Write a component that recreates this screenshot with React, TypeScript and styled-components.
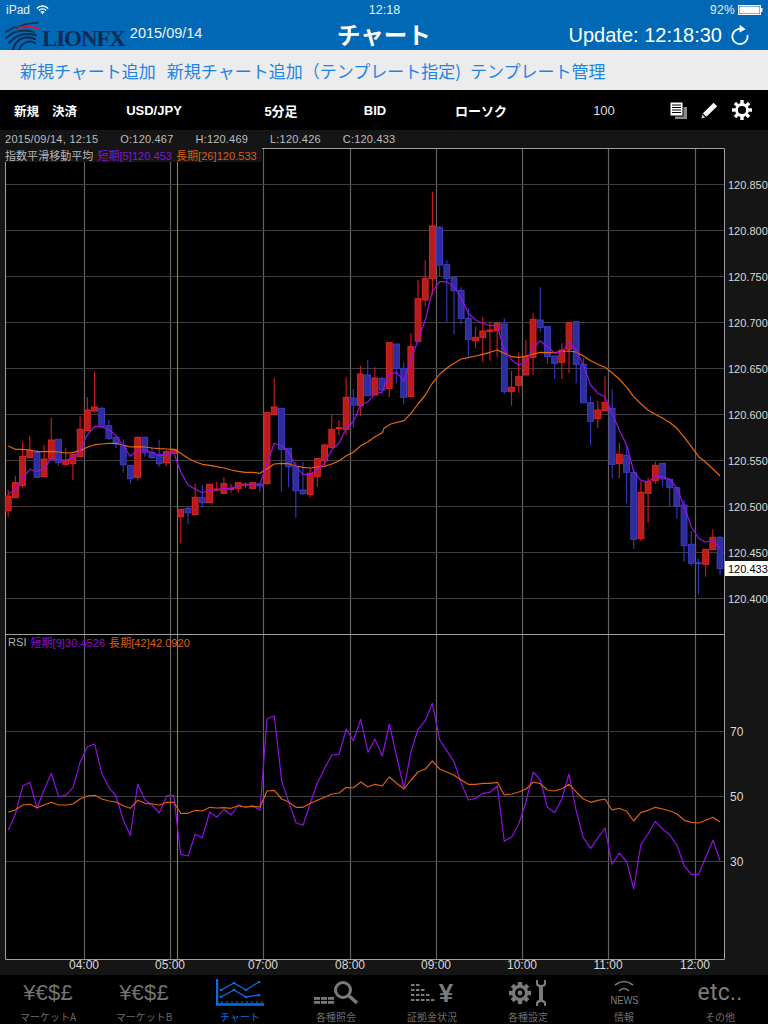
import React from "react";
import styled, { createGlobalStyle } from "styled-components";

const Global = createGlobalStyle`
  html, body { margin: 0; padding: 0; background: #000; }
  body { font-family: "Liberation Sans", "Noto Sans CJK JP", sans-serif; }
`;

const Page = styled.div`
  width: 768px;
  height: 1024px;
  display: flex;
  flex-direction: column;
  overflow: hidden;
  background: #000;
`;

const Header = styled.header`
  height: 50px;
  background: #0068b4;
  color: #fff;
  display: flex;
  flex-direction: column;
`;
const StatusRow = styled.div`
  height: 20px;
  display: grid;
  grid-template-columns: 1fr auto 1fr;
  align-items: center;
  padding: 0 5px 0 6px;
  font-size: 12px;
  color: #e8f1f8;
`;
const StatusLeft = styled.div`
  display: flex;
  align-items: center;
  gap: 6px;
`;
const StatusRight = styled.div`
  display: flex;
  align-items: center;
  justify-content: flex-end;
  gap: 3px;
  letter-spacing: 0.3px;
`;
const Clock = styled.div`
  font-weight: 400;
  font-size: 12.5px;
`;
const NavRow = styled.div`
  height: 30px;
  display: grid;
  grid-template-columns: 1fr auto 1fr;
  align-items: center;
`;
const Brand = styled.div`
  display: flex;
  align-items: center;
  padding-left: 5px;
`;
const BrandName = styled.span`
  font-family: "Liberation Serif", serif;
  font-weight: 700;
  font-size: 23px;
  line-height: 26px;
  letter-spacing: -1.1px;
  color: #102a50;
  margin: 6px 0 0 3px;
`;
const DateText = styled.span`
  font-size: 14.5px;
  margin: -7px 0 0 5px;
  color: #eef5fa;
`;
const Title = styled.h1`
  margin: -5px 0 0;
  font-family: "Noto Sans CJK JP", sans-serif;
  font-size: 23.5px;
  line-height: 30px;
  font-weight: 700;
`;
const UpdateBox = styled.div`
  display: flex;
  justify-content: flex-end;
  align-items: center;
  gap: 9px;
  padding-right: 19px;
  margin-top: -2px;
  font-size: 20px;
`;

const ActionBar = styled.nav`
  height: 40px;
  background: #ececec;
  display: flex;
  align-items: center;
  gap: 11px;
  padding-left: 20px;
`;
const ActionLink = styled.span<{ $tight?: boolean }>`
  font-family: "Noto Sans CJK JP", sans-serif;
  font-size: 17px;
  color: #1f83e6;
  white-space: nowrap;
  margin-right: ${(p) => (p.$tight ? "-2px" : "0")};
`;

const Toolbar = styled.div`
  height: 40px;
  background: #000;
  display: grid;
  grid-template-columns: 90px 128px 126px 62px 150px 96px 1fr;
  align-items: center;
  color: #fff;
  font-size: 13px;
  font-weight: 700;
`;
const TradeGroup = styled.div`
  display: flex;
  gap: 13px;
  padding-left: 14px;
  font-family: "Noto Sans CJK JP", sans-serif;
  font-size: 12.5px;
`;
const ToolCell = styled.div<{ $light?: boolean }>`
  text-align: center;
  font-weight: ${(p) => (p.$light ? 400 : 700)};
  color: ${(p) => (p.$light ? "#ddd" : "#fff")};
`;
const ToolIcons = styled.div`
  display: flex;
  align-items: center;
  gap: 14px;
  padding-left: 18px;
`;

const InfoBar = styled.div`
  height: 18px;
  background: #151515;
  display: flex;
  align-items: center;
  gap: 22px;
  padding-left: 5px;
  font-size: 11px;
  letter-spacing: 0.2px;
  color: #bdbdbd;
`;
const InfoDate = styled.span`
  letter-spacing: 0.27px;
`;

const ChartWrap = styled.div`
  position: relative;
  height: 827px;
  background: #151515;
`;
const ChartSvg = styled.svg`
  display: block;
`;
const Legend = styled.div<{ $top: number; $left: number; $bg?: boolean; $gap: number }>`
  position: absolute;
  top: ${(p) => p.$top}px;
  left: ${(p) => p.$left}px;
  display: flex;
  align-items: center;
  gap: ${(p) => p.$gap}px;
  height: 14px;
  padding-right: 5px;
  font-size: 11px;
  letter-spacing: 0.05px;
  white-space: nowrap;
  background: ${(p) => (p.$bg ? "#151515" : "transparent")};
`;
const LegendText = styled.span<{ $color: string }>`
  color: ${(p) => p.$color};
`;

const TabBar = styled.footer`
  height: 49px;
  background: #000;
  display: grid;
  grid-template-columns: repeat(8, 96px);
`;
const Tab = styled.div<{ $active?: boolean }>`
  display: flex;
  flex-direction: column;
  align-items: center;
  color: ${(p) => (p.$active ? "#0a6ee0" : "#6d6d6d")};
`;
const TabIcon = styled.div`
  height: 35px;
  display: flex;
  align-items: center;
  justify-content: center;
`;
const TabLabel = styled.span`
  font-family: "Noto Sans CJK JP", sans-serif;
  font-size: 10px;
  line-height: 14px;
  white-space: nowrap;
`;
const Currency = styled.span`
  font-size: 22px;
  letter-spacing: 0.2px;
  color: #747474;
`;
const YenMark = styled.span`
  font-size: 26px;
  font-weight: 700;
  line-height: 30px;
  color: #7a7a7a;
`;
const NewsStack = styled.div`
  display: flex;
  flex-direction: column;
  align-items: center;
`;
const NewsMark = styled.span`
  font-size: 11px;
  line-height: 12px;
  margin-top: 1px;
  color: #7f7f7f;
  transform: scaleX(0.85);
`;
const Etc = styled.span`
  font-family: Roboto, sans-serif;
  font-size: 23px;
  font-weight: 400;
  letter-spacing: 0.2px;
  color: #7c7c7c;
`;

const GridV = styled.line`
  stroke: #636363;
  stroke-width: 1.2;
`;
const GridH = styled.line`
  stroke: #404040;
  stroke-width: 1;
`;
const Cursor = styled.line`
  stroke: #8c8a1e;
  stroke-width: 1.1;
`;
const Frame = styled.path`
  fill: none;
  stroke: #a0a0a0;
  stroke-width: 1;
`;
const Wick = styled.line<{ $up: boolean }>`
  stroke: ${(p) => (p.$up ? "#c41a1a" : "#3434b8")};
  stroke-width: 1.2;
`;
const Body = styled.rect<{ $up: boolean }>`
  fill: ${(p) => (p.$up ? "#b81c1c" : "#2d2d9e")};
  stroke: ${(p) => (p.$up ? "#e02424" : "#3c3cc4")};
  stroke-width: 1;
`;
const Trend = styled.polyline<{ $color: string }>`
  fill: none;
  stroke: ${(p) => p.$color};
  stroke-width: 1.2;
  stroke-linejoin: round;
`;
const AxisText = styled.text<{ $size?: number }>`
  fill: #d8d8d8;
  font-size: ${(p) => p.$size ?? 12}px;
  font-family: "Liberation Sans", sans-serif;
`;
const PriceTag = styled.rect`
  fill: #fff;
`;
const PriceTagText = styled.text`
  fill: #000;
  font-size: 11px;
  font-family: "Liberation Sans", sans-serif;
`;

type C = [number, number, number, number, number];
// [up, bodyTop, bodyBottom, wickTop, wickBottom], crop coordinates
const c1: C[] = [
  [1,408,452,390,470],[1,368,413,347,413],[1,289,377,245,385],[1,272,293,228,293],[0,277,352,270,352],
  [1,297,350,255,350],[1,240,297,173,297],[0,238,308,238,318],[1,302,313,265,318],[1,283,311,283,360],
  [1,208,290,167,290],[1,150,212,112,212],[1,141,153,35,158],[0,145,200,140,205],[0,197,235,180,240],
  [0,232,252,232,265],[0,258,314,238,338],[0,316,356,316,370],[1,232,352,228,362],[0,232,278,230,290],
  [0,277,293,260,296],[0,283,311,240,320],[1,275,308,270,318],[1,268,280,268,282],[1,448,470,448,550],
  [0,445,458,440,492],[1,412,464,372,464],[0,412,428,375,443],[1,373,428,373,428],[1,387,389,366,392],
  [1,371,400,352,400],[1,385,388,372,398],[1,368,385,368,398],[1,372,374,368,385],[1,368,385,368,388],
  [0,372,378,368,395],[1,158,370,158,375],[1,141,163,55,163],[0,145,268,145,395],[0,265,320,265,382],
  [0,320,392,305,473],[0,390,401,306,405],[1,340,403,325,412],[1,296,350,296,380],[1,255,303,250,318],
  [1,208,262,165,262],[1,203,206,180,225],[1,112,208,52,225],[0,114,135,87,205],[1,42,137,18,168],
  [0,45,107,0,107],[1,54,105,22,105],[0,55,90,50,95],
];
const c2: C[] = [
  [1,488,625,488,650],[0,492,565,492,608],[0,565,652,548,672],[1,500,650,460,650],[1,356,484,300,484],
  [1,295,360,240,380],[1,138,296,35,345],[0,142,255,138,290],[0,254,296,240,425],[0,293,332,293,463],
  [0,331,415,322,432],[0,415,478,385,532],[1,472,482,440,505],[1,453,472,410,547],[1,450,454,425,542],
  [1,430,452,425,530],[0,432,635,415,643],[1,622,634,573,677],[1,590,616,517,638],[1,530,585,480,585],
  [1,418,532,400,585],[0,420,442,322,455],[0,440,530,440,552],[0,528,550,528,597],[1,510,547,490,597],
  [1,428,508,428,580],[0,425,553,425,610],[0,553,668,535,668],[0,668,724,648,796],[1,690,716,662,744],
  [1,668,692,588,690],
];
const c3: C[] = [
  [0,25,193,-32,235],[1,163,191,128,235],[0,166,217,140,310],[0,218,418,205,447],[1,277,416,245,423],
  [1,245,280,233,368],[1,196,242,185,252],[0,190,237,190,260],[0,238,263,238,318],[0,263,318,263,356],
  [0,315,437,300,485],[0,433,490,393,497],[0,488,491,476,583],[1,448,493,448,530],[1,412,449,388,449],
  [0,412,506,408,525],
];
const toScreen = (rows: C[], base: number): C[] =>
  rows.map(([u, a, b, w1, w2]) => [u, base + a / 3, base + b / 3, base + w1 / 3, base + w2 / 3]);
const candles: C[] = [...toScreen(c1, 360), ...toScreen(c2, 180), ...toScreen(c3, 400)];

const pts = (ox: number, oy: number, s: string) =>
  s.trim().split(/\s+/).map((p) => {
    const [x, y] = p.split(",").map(Number);
    return `${(ox + x / 3).toFixed(1)},${(oy + y / 3).toFixed(1)}`;
  }).join(" ");

const emaShort = [
  pts(0, 360, "25,402 46,390 68,355 90,328 111,335 132,325 154,296 176,300 197,300 219,295 240,270 262,225 284,199 305,200 327,210 348,226 370,258 391,289 413,270 435,270 456,278 478,287 500,283 521,278 542,335 564,375 586,388 607,398 629,390 650,390 672,385 693,385 715,378 736,375 758,372 780,372 801,310 823,250 845,258 866,277 888,320 909,343 931,343 952,328 974,310 995,270 1017,250 1039,205 1060,185 1082,135 1104,125 1125,100 1147,97"),
  pts(384, 180, "16,580 38,578 60,603 81,540 102,480 124,420 145,335 167,305 188,305 210,320 232,355 253,400 275,420 296,430 318,437 340,437 361,510 383,540 404,555 426,545 448,500 469,483 490,500 512,520 534,515 555,487 576,510 598,555 620,615 642,640 663,650"),
  pts(384, 400, "684,40 706,90 728,135 749,215 771,242 792,245 814,230 836,230 858,238 879,265 901,320 922,380 944,415 965,427 987,420 1008,445"),
].join(" ");
const emaLong = [
  pts(0, 360, "25,258 46,268 68,268 90,270 111,275 132,275 154,274 176,276 197,279 219,278 240,272 262,262 284,254 305,252 327,250 348,250 370,255 391,261 413,260 435,261 456,264 478,266 500,267 521,268 542,280 564,295 586,305 607,313 629,316 650,320 672,324 693,330 715,334 736,337 758,337 780,340 801,326 823,312 845,310 866,311 888,318 909,322 931,324 952,321 974,319 995,312 1017,303 1039,287 1060,277 1082,257 1104,245 1125,230 1147,218"),
  pts(384, 180, "0,745 20,732 60,722 81,700 102,672 124,645 145,610 167,582 188,565 210,550 232,537 253,533 275,528 296,523 318,517 340,510 361,520 383,530 404,532 426,528 448,522 469,517 490,518 512,518 534,514 555,513 576,516 598,528 620,542 642,553 663,562 684,578 706,597 728,622 749,650 771,672 792,690 814,703 836,715 858,728"),
  pts(384, 400, "879,85 901,112 922,140 944,170 965,187 987,207 1008,228"),
].join(" ");
const rsiShort = [
  pts(0, 630, "25,600 46,553 68,468 90,457 111,535 132,480 154,430 176,500 197,496 219,473 240,398 262,350 284,342 305,430 327,473 348,498 370,570 391,616 413,462 435,510 456,525 478,549 500,497 521,496 542,673 564,678 586,612 607,624 629,546 650,562 672,538 693,555 715,525 736,532 758,527 780,540 801,266 823,258 845,453 866,515 888,578 909,586 931,520 952,460 974,415 995,375 1017,373 1039,297 1060,332 1082,268 1104,367 1125,327 1147,378"),
  pts(384, 680, "16,132 38,230 60,325 81,215 102,148 124,122 145,70 167,180 188,212 210,245 232,310 253,360 275,355 296,340 318,337 340,318 361,484 383,471 404,433 426,365 448,276 469,300 490,381 512,398 534,356 555,282 576,390 598,473 620,505 642,473 663,444 684,553 706,519 728,545 749,627 771,492 792,462 814,424 836,447 858,465 879,497 901,558 922,583 944,583 965,532 987,481 1008,542"),
].join(" ");
const rsiLong = [
  pts(0, 630, "25,547 46,540 68,525 90,523 111,533 132,525 154,517 176,525 197,525 219,522 240,507 262,498 284,496 305,507 327,513 348,516 370,527 391,535 413,511 435,520 456,522 478,525 500,517 521,517 542,550 564,550 586,541 607,543 629,532 650,534 672,533 693,535 715,527 736,531 758,529 780,531 801,483 823,481 845,507 866,516 888,532 909,532 931,520 952,511 974,502 995,492 1017,489 1039,472 1060,474 1082,456 1104,471 1125,463 1147,468"),
  pts(384, 680, "16,291 38,310 60,327 81,300 102,276 124,267 145,243 167,267 188,276 210,286 232,300 253,313 275,313 296,310 318,310 340,307 361,345 383,342 404,336 426,327 448,306 469,311 490,330 512,333 534,326 555,313 576,335 598,357 620,367 642,361 663,357 684,390 706,385 728,394 749,423 771,397 792,391 814,382 836,387 858,393 879,402 901,421 922,427 944,429 965,421 987,412 1008,426"),
].join(" ");

const vLines = [84, 170, 263, 350, 436, 522, 608, 695];
const times = ["04:00", "05:00", "07:00", "08:00", "09:00", "10:00", "11:00", "12:00"];
const prices = ["120.850", "120.800", "120.750", "120.700", "120.650", "120.600", "120.550", "120.500", "120.450", "120.400"];
const rsiLevels: [string, number][] = [["70", 731], ["50", 796], ["30", 861]];

const Wifi = () => (
  <svg width="13" height="10" viewBox="0 0 13 10" fill="none" stroke="#fff" strokeWidth="1.4">
    <path d="M.8 3.4a8 8 0 0 1 11.4 0M2.8 5.4a5.2 5.2 0 0 1 7.4 0M4.8 7.4a2.4 2.4 0 0 1 3.4 0" />
    <path d="M5.6 8.6 6.5 9.6 7.4 8.6 6.5 7.8Z" fill="#fff" stroke="none" />
  </svg>
);
const Battery = () => (
  <svg width="25" height="10" viewBox="0 0 25 10">
    <rect x=".5" y=".5" width="22" height="9" fill="none" stroke="#fff" />
    <rect x="1.5" y="1.5" width="20" height="7" fill="#fff" />
    <rect x="23" y="3" width="1.5" height="4" fill="#fff" />
  </svg>
);
const Lion = () => (
  <svg width="34" height="28" viewBox="0 0 34 28" fill="none" stroke="#102a50" strokeLinecap="round">
    <path d="M33 1C24 .5 17 3 12 6" strokeWidth="1.5" />
    <path d="M33 7C27 4 20 4 14 6" stroke="#c8202c" strokeWidth="2.2" />
    <path d="M10 5C6 7 3 9 1 10" strokeWidth="1.6" />
    <path d="M29 10C21 8 12 8 5 13 3 14 2 15 1 16" strokeWidth="1.8" />
    <path d="M31 13C23 11 14 12 8 17 6 19 5 20 4 21" strokeWidth="2" />
    <path d="M30 17C24 14 16 15 12 20 10 22 9 24 8 27" strokeWidth="2.2" />
    <path d="M30 21C25 18 19 20 16 24L14 28" strokeWidth="2" />
  </svg>
);
const Refresh = () => (
  <svg width="18" height="22" viewBox="0 0 18 22" fill="none" stroke="#fff" strokeWidth="1.8">
    <path d="M11.6 5.4A7.6 7.6 0 1 0 16.4 11" />
    <path d="M8.6 .8 14.6 5.2 8.6 8.6Z" fill="#fff" stroke="none" />
  </svg>
);
const PagesIcon = () => (
  <svg width="17" height="17" viewBox="0 0 17 17">
    <rect x="5" y="5" width="12" height="12" fill="#8a8a8a" />
    <rect x="0" y="0" width="13" height="14" fill="#fff" stroke="#000" strokeWidth="1" />
    <path d="M2 3h9M2 5.500h9M2 8h9M2 10.500h9" stroke="#000" strokeWidth="1.200" />
  </svg>
);
const Pencil = () => (
  <svg width="17" height="17" viewBox="0 0 17 17" fill="#fff">
    <path d="M12.600 .8 16.200 4.200 5.400 14.800 1.800 11.400Z" />
    <path d="M1.300 12.400 4.400 15.400 .4 16.600Z" fill="#ccc" />
  </svg>
);
const GearSolid = ({ size, color }: { size: number; color: string }) => (
  <svg width={size} height={size} viewBox="0 0 20 20" fill="none">
    <circle cx="10" cy="10" r="5.500" stroke={color} strokeWidth="2.800" />
    {[0, 45, 90, 135, 180, 225, 270, 315].map((a) => (
      <rect key={a} x="8.300" y="0" width="3.400" height="3.800" fill={color} transform={`rotate(${a} 10 10)`} />
    ))}
  </svg>
);
const ChartTabIcon = () => (
  <svg width="48" height="27" viewBox="0 0 48 27" fill="none" stroke="#0a6ee0">
    <path d="M1 0V25.500H48" strokeWidth="2.400" />
    <path d="M5 11 18 4 30 11 43 3" strokeWidth="1.300" />
    <path d="M5 18 18 11 30 18 43 16" strokeWidth="1.300" />
    <g fill="#0a6ee0" stroke="none">
      {[[5, 11], [18, 4], [30, 11], [43, 3], [5, 18], [18, 11], [30, 18], [43, 16]].map(([x, y]) => (
        <circle key={`${x}-${y}`} cx={x} cy={y} r="1.300" />
      ))}
    </g>
    <path d="M6 22v3M11 22v3M16 22v3M21 22v3M26 22v3M31 22v3M36 22v3M41 22v3M46 22v3" strokeWidth="1" />
  </svg>
);
const SearchTabIcon = () => (
  <svg width="44" height="24" viewBox="0 0 44 24" fill="none">
    <g fill="#7a7a7a">
      {[0, 7, 14].flatMap((x) => [16, 20].map((y) => <rect key={`${x}${y}`} x={x} y={y} width="6" height="2.800" />))}
    </g>
    <circle cx="29" cy="9" r="7.500" stroke="#7a7a7a" strokeWidth="3" />
    <path d="M34.500 14.500 43 22" stroke="#7a7a7a" strokeWidth="3.600" />
  </svg>
);
const MarginDots = () => (
  <svg width="28" height="24" viewBox="0 0 28 24">
    <g fill="#7a7a7a">
      {[[0, 3, 2], [0, 8, 3], [0, 13, 4], [0, 18, 5]].flatMap(([x, y, n]) =>
        Array.from({ length: n }).map((_, i) => <rect key={`${y}-${i}`} x={x + i * 5} y={y} width="3.500" height="2" />)
      )}
    </g>
  </svg>
);
const SettingsTabIcon = () => (
  <svg width="38" height="26" viewBox="0 0 38 26" fill="none">
    <g transform="translate(0 2) scale(1.100)">
      <circle cx="10" cy="10" r="6" stroke="#7a7a7a" strokeWidth="3" />
      <circle cx="10" cy="10" r="2.200" fill="#7a7a7a" />
      {[0, 45, 90, 135, 180, 225, 270, 315].map((a) => (
        <rect key={a} x="8" y="0" width="4" height="3.500" fill="#7a7a7a" transform={`rotate(${a} 10 10)`} />
      ))}
    </g>
    <path d="M27 0V4C27 6 29 7 30 7V20C29 20 27 21 27 23V26H29V24C29 23 31 22 32 22 34 22 35 23 35 24V26H37V23C37 21 35 20 34 20V7C35 7 37 6 37 4V0H35V3C35 4 34 5 32 5 31 5 29 4 29 3V0Z" fill="#7a7a7a" />
  </svg>
);
const NewsArcs = () => (
  <svg width="30" height="14" viewBox="0 0 30 14" fill="none">
    <path d="M6 6Q15 -1 24 6" stroke="#7a7a7a" strokeWidth="1.600" />
    <path d="M10 12Q15 7 20 12" stroke="#7a7a7a" strokeWidth="1.600" />
  </svg>
);

export default function App() {
  return (
    <Page>
      <Global />
      <Header>
        <StatusRow>
          <StatusLeft>iPad <Wifi /></StatusLeft>
          <Clock>12:18</Clock>
          <StatusRight>92% <Battery /></StatusRight>
        </StatusRow>
        <NavRow>
          <Brand>
            <Lion />
            <BrandName>LIONFX</BrandName>
            <DateText>2015/09/14</DateText>
          </Brand>
          <Title>チャート</Title>
          <UpdateBox>Update: 12:18:30 <Refresh /></UpdateBox>
        </NavRow>
      </Header>

      <ActionBar>
        <ActionLink>新規チャート追加</ActionLink>
        <ActionLink $tight>新規チャート追加（テンプレート指定)</ActionLink>
        <ActionLink>テンプレート管理</ActionLink>
      </ActionBar>

      <Toolbar>
        <TradeGroup><span>新規</span><span>決済</span></TradeGroup>
        <ToolCell>USD/JPY</ToolCell>
        <ToolCell>5分足</ToolCell>
        <ToolCell>BID</ToolCell>
        <ToolCell>ローソク</ToolCell>
        <ToolCell $light>100</ToolCell>
        <ToolIcons><PagesIcon /><Pencil /><GearSolid size={20} color="#fff" /></ToolIcons>
      </Toolbar>

      <InfoBar>
        <InfoDate>2015/09/14, 12:15</InfoDate>
        <span>O:120.467</span>
        <span>H:120.469</span>
        <span>L:120.426</span>
        <span>C:120.433</span>
      </InfoBar>

      <ChartWrap>
        <ChartSvg width="768" height="827" viewBox="0 148 768 827">
          <rect x="5" y="148" width="719" height="811" fill="#000" />
          {vLines.map((x) => <GridV key={x} x1={x + 0.5} x2={x + 0.5} y1="148" y2="959" />)}
          {prices.map((p, i) => <GridH key={p} x1="5" x2="724" y1={184.5 + i * 46} y2={184.5 + i * 46} />)}
          {rsiLevels.map(([l, y]) => <GridH key={l} x1="5" x2="724" y1={y + 0.5} y2={y + 0.5} />)}
          <Cursor x1="177.500" x2="177.500" y1="162" y2="959" />
          <Frame d="M5.500 148.500H724.500V959.500H5.500ZM5.500 634.500H724.500" />

          {candles.map(([u, a, b, w1, w2], i) => {
            const x = 8.2 + i * 7.19;
            return (
              <g key={i}>
                <Wick $up={!!u} x1={x} x2={x} y1={w1} y2={w2} />
                <Body $up={!!u} x={x - 2.9} width="5.800" y={a} height={Math.max(b - a, 1)} />
              </g>
            );
          })}
          <Trend $color="#e8690a" points={emaLong} />
          <Trend $color="#9a10e8" points={emaShort} />
          <Trend $color="#8f10e0" points={rsiShort} />
          <Trend $color="#e0600a" points={rsiLong} />

          {prices.map((p, i) => <AxisText key={p} $size={11} x="728" y={188.5 + i * 46}>{p}</AxisText>)}
          {rsiLevels.map(([l, y]) => <AxisText key={l} x="730" y={y + 4.5}>{l}</AxisText>)}
          <PriceTag x="725" y="561" width="43" height="15" />
          <PriceTagText x="728" y="573">120.433</PriceTagText>
          {times.map((t, i) => <AxisText key={t} x={vLines[i]} y="969" textAnchor="middle">{t}</AxisText>)}
        </ChartSvg>
        <Legend $top={0} $left={5} $bg $gap={4}>
          <LegendText $color="#b4b4b4">指数平滑移動平均</LegendText>
          <LegendText $color="#8a10d8">短期[5]120.453</LegendText>
          <LegendText $color="#d9600a">長期[26]120.533</LegendText>
        </Legend>
        <Legend $top={487} $left={8} $gap={4}>
          <LegendText $color="#b4b4b4">RSI</LegendText>
          <LegendText $color="#8a10d8">短期[9]30.4526</LegendText>
          <LegendText $color="#d9600a">長期[42]42.0920</LegendText>
        </Legend>
      </ChartWrap>

      <TabBar>
        <Tab><TabIcon><Currency>¥€$£</Currency></TabIcon><TabLabel>マーケットA</TabLabel></Tab>
        <Tab><TabIcon><Currency>¥€$£</Currency></TabIcon><TabLabel>マーケットB</TabLabel></Tab>
        <Tab $active><TabIcon><ChartTabIcon /></TabIcon><TabLabel>チャート</TabLabel></Tab>
        <Tab><TabIcon><SearchTabIcon /></TabIcon><TabLabel>各種照会</TabLabel></Tab>
        <Tab><TabIcon><MarginDots /><YenMark>¥</YenMark></TabIcon><TabLabel>証拠金状況</TabLabel></Tab>
        <Tab><TabIcon><SettingsTabIcon /></TabIcon><TabLabel>各種設定</TabLabel></Tab>
        <Tab><TabIcon><NewsStack><NewsArcs /><NewsMark>NEWS</NewsMark></NewsStack></TabIcon><TabLabel>情報</TabLabel></Tab>
        <Tab><TabIcon><Etc>etc..</Etc></TabIcon><TabLabel>その他</TabLabel></Tab>
      </TabBar>
    </Page>
  );
}
